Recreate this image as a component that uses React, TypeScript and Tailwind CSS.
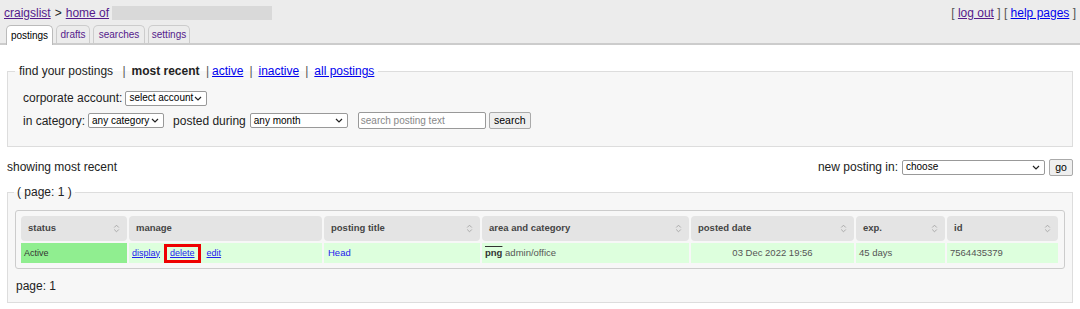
import React from 'react';

const font = { fontFamily: '"Liberation Sans", Arial, sans-serif' };

const Sort = () => (
  <svg width="7" height="9" viewBox="0 0 7 9" className="shrink-0">
    <path d="M1.2 3.5 L3.5 1.2 L5.8 3.5" fill="none" stroke="#aaa" strokeWidth="1" />
    <path d="M1.2 5.5 L3.5 7.8 L5.8 5.5" fill="none" stroke="#aaa" strokeWidth="1" />
  </svg>
);

const Caret = () => (
  <svg width="8" height="5" viewBox="0 0 8 5" className="shrink-0">
    <path d="M1 1 L4 4 L7 1" fill="none" stroke="#222" strokeWidth="1.2" />
  </svg>
);

const Select: React.FC<{ label: string; w: string }> = ({ label, w }) => (
  <span className={`inline-flex h-[15px] items-center justify-between overflow-hidden whitespace-nowrap rounded-[2px] border border-[#999] bg-white pl-[3px] pr-[4px] text-[10px] leading-none text-black ${w}`}>
    <span>{label}</span>
    <Caret />
  </span>
);

const Btn: React.FC<{ label: string; w: string }> = ({ label, w }) => (
  <span className={`inline-flex h-[17px] items-center justify-center rounded-[2px] border border-[#aaa] bg-[#efefef] text-[10.5px] leading-none text-black ${w}`}>
    {label}
  </span>
);

const tabs = [
  { name: 'postings', active: true, w: 'w-[47px]' },
  { name: 'drafts', active: false, w: 'w-[34px]' },
  { name: 'searches', active: false, w: 'w-[52px]' },
  { name: 'settings', active: false, w: 'w-[42px]' },
];

const heads = [
  { name: 'status', w: 'w-[106px]', sort: true },
  { name: 'manage', w: 'w-[193px]', sort: false },
  { name: 'posting title', w: 'w-[156px]', sort: true },
  { name: 'area and category', w: 'w-[207px]', sort: true },
  { name: 'posted date', w: 'w-[163px]', sort: true },
  { name: 'exp.', w: 'w-[89px]', sort: true },
  { name: 'id', w: 'w-[111px]', sort: true },
];

export default function App() {
  return (
    <div style={font} className="h-[309px] w-[1080px] overflow-hidden bg-white text-[12px] text-[#222]">
      {/* header */}
      <div className="border-b-2 border-[#ccc] bg-[#ececec]">
        <div className="flex h-[24px] items-center justify-between px-[4px] pt-[1px]">
          <div className="flex items-center">
            <span className="text-[#551a8b] underline">craigslist</span>
            <span className="mx-[4px]">&gt;</span>
            <span className="text-[#551a8b] underline">home of</span>
            <span className="ml-[3px] h-[14px] w-[160px] bg-[#d9d9d9]" />
          </div>
          <div className="text-[#555]">
            [ <span className="text-[#551a8b] underline">log out</span> ] [{' '}
            <span className="text-[#0000ee] underline">help pages</span> ]
          </div>
        </div>
        <div className="flex h-[19px] items-end gap-[3px] px-[6px]">
          {tabs.map((t) => (
            <div
              key={t.name}
              className={`flex h-[18px] items-center justify-center rounded-t-[5px] border border-b-0 text-[10px] ${t.w} ${
                t.active ? '-mb-[2px] h-[20px] border-[#bbb] bg-white text-black' : 'border-[#ccc] bg-[#ececec] text-[#551a8b]'
              }`}
            >
              {t.name}
            </div>
          ))}
        </div>
      </div>

      {/* find your postings */}
      <div className="px-[7px] pt-[19px]">
        <fieldset className="h-[83px] border border-[#ddd] bg-[#f7f7f7] px-[15px]">
          <legend className="ml-[-8px] px-[4px] leading-[14px]">
            find your postings <span className="mx-[6px] text-[#555]">|</span>
            <b>most recent</b> <span className="mx-[3px] text-[#555]">|</span>
            <span className="text-[#0000ee] underline">active</span>
            <span className="mx-[6px] text-[#555]">|</span>
            <span className="text-[#0000ee] underline">inactive</span>
            <span className="mx-[6px] text-[#555]">|</span>
            <span className="text-[#0000ee] underline">all postings</span>
          </legend>
          <div className="mt-[12px] flex h-[16px] items-center gap-[3px]">
            <span>corporate account:</span>
            <Select label="select account" w="w-[82px]" />
          </div>
          <div className="mt-[6px] flex h-[17px] items-center">
            <span>in category:</span>
            <span className="ml-[3px] flex"><Select label="any category" w="w-[76px]" /></span>
            <span className="ml-[9px]">posted during</span>
            <span className="ml-[4px] flex"><Select label="any month" w="w-[98px]" /></span>
            <span className="ml-[10px] inline-flex h-[17px] w-[128px] items-center rounded-[2px] border border-[#999] bg-white px-[2px] text-[10px] text-[#888]">
              search posting text
            </span>
            <span className="ml-[3px] flex"><Btn label="search" w="w-[42px]" /></span>
          </div>
        </fieldset>
      </div>

      {/* showing */}
      <div className="mt-[10px] flex h-[20px] items-center justify-between px-[7px]">
        <span>showing most recent</span>
        <div className="flex items-center">
          <span>new posting in:</span>
          <span className="ml-[4px] flex"><Select label="choose" w="w-[143px]" /></span>
          <span className="ml-[4px] flex"><Btn label="go" w="w-[24px]" /></span>
        </div>
      </div>

      {/* results */}
      <div className="px-[7px] pt-[8px]">
        <fieldset className="h-[118px] border border-[#ddd] bg-[#f7f7f7] px-[7px]">
          <legend className="ml-[-1px] px-[3px] leading-[14px]">( page: 1 )</legend>
          <div className="mt-[11px] rounded-[3px] border border-[#ccc] px-[3px] py-[3px]">
            <table className="border-separate border-spacing-x-[2px] border-spacing-y-[2px] text-[9.5px]">
              <thead>
                <tr>
                  {heads.map((h) => (
                    <th key={h.name} className={`h-[25px] rounded-[4px] bg-[#e4e4e4] px-[7px] text-left font-bold text-[#444] ${h.w}`}>
                      <div className="flex items-center justify-between">
                        <span>{h.name}</span>
                        {h.sort && <Sort />}
                      </div>
                    </th>
                  ))}
                </tr>
              </thead>
              <tbody>
                <tr className="h-[20px]">
                  <td className="bg-[#90ee90] px-[3px] align-middle text-[9px] leading-[14px] text-[#333]">Active</td>
                  <td className="bg-[#ddffdd] px-[3px] text-[9px]">
                    <span className="text-[#2222ee] underline">display</span>
                    <span className="mx-[4px] inline-block border-[3px] border-[#e00] px-[3px] leading-[13px] text-[#2222ee] underline">delete</span>
                    <span className="ml-[2px] text-[#2222ee] underline">edit</span>
                  </td>
                  <td className="bg-[#ddffdd] px-[4px] text-[#2222ee]">Head</td>
                  <td className="bg-[#ddffdd] px-[3px] text-[#555]">
                    <span className="font-bold text-[#333] overline">png</span> admin/office
                  </td>
                  <td className="bg-[#ddffdd] px-[4px] text-center text-[#555]">03 Dec 2022 19:56</td>
                  <td className="bg-[#ddffdd] px-[3px] text-[#555]">45 days</td>
                  <td className="bg-[#ddffdd] px-[3px] text-[#555]">7564435379</td>
                </tr>
              </tbody>
            </table>
          </div>
          <div className="mt-[8px] pl-[1px]">page: 1</div>
        </fieldset>
      </div>
    </div>
  );
}
